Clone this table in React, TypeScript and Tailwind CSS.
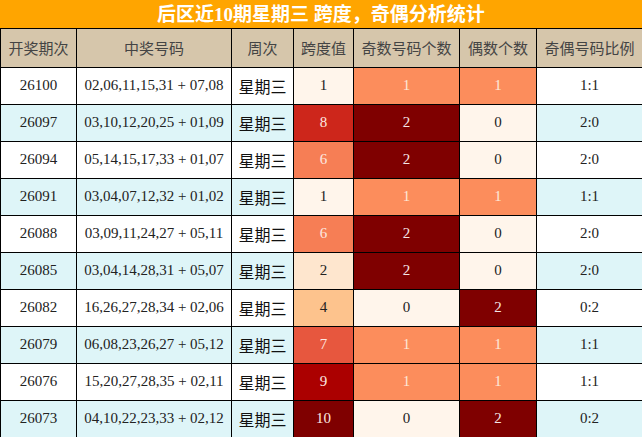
import React from "react";

const spanColor: Record<number, string> = {
  0: "bg-[#fff5eb]",
  1: "bg-[#fff5eb]",
  2: "bg-[#fee6ce]",
  3: "bg-[#fdd4ab]",
  4: "bg-[#fdc38d]",
  5: "bg-[#fca06c]",
  6: "bg-[#f67e55]",
  7: "bg-[#e7573e]",
  8: "bg-[#cd261b]",
  9: "bg-[#ab0000]",
  10: "bg-[#7f0000]",
};

const cntColor: Record<number, string> = {
  0: "bg-[#fff5eb] text-[#222]",
  1: "bg-[#fc8d5c] text-[#fde8d8]",
  2: "bg-[#7f0000] text-[#f5e6e6]",
};

const rows: [string, string, number, number, number, string][] = [
  ["26100", "02,06,11,15,31 + 07,08", 1, 1, 1, "1:1"],
  ["26097", "03,10,12,20,25 + 01,09", 8, 2, 0, "2:0"],
  ["26094", "05,14,15,17,33 + 01,07", 6, 2, 0, "2:0"],
  ["26091", "03,04,07,12,32 + 01,02", 1, 1, 1, "1:1"],
  ["26088", "03,09,11,24,27 + 05,11", 6, 2, 0, "2:0"],
  ["26085", "03,04,14,28,31 + 05,07", 2, 2, 0, "2:0"],
  ["26082", "16,26,27,28,34 + 02,06", 4, 0, 2, "0:2"],
  ["26079", "06,08,23,26,27 + 05,12", 7, 1, 1, "1:1"],
  ["26076", "15,20,27,28,35 + 02,11", 9, 1, 1, "1:1"],
  ["26073", "04,10,22,23,33 + 02,12", 10, 0, 2, "0:2"],
];

const headers = ["开奖期次", "中奖号码", "周次", "跨度值", "奇数号码个数", "偶数个数", "奇偶号码比例"];
const widths = ["w-[76px]", "w-[155px]", "w-[62px]", "w-[60px]", "w-[106px]", "w-[77px]", "w-[106px]"];

export default function App() {
  return (
    <div
      className="w-[642px] h-[437px] overflow-hidden bg-white"
      style={{ fontFamily: '"Liberation Serif", "Noto Sans CJK SC", serif' }}
    >
      <div className="h-[29px] bg-[#ffa500] border-b border-black flex items-center justify-center text-white font-bold text-[19px] leading-none">
        后区近10期星期三 跨度，奇偶分析统计
      </div>
      <table className="w-[642px] table-fixed border-collapse">
        <colgroup>
          {widths.map((w, i) => (
            <col key={i} className={w} />
          ))}
        </colgroup>
        <thead>
          <tr className="h-[38px] bg-[#d6c6ab]">
            {headers.map((h) => (
              <th
                key={h}
                className="border border-black border-t-0 font-normal text-[15px] text-[#444] p-0"
                style={{ fontFamily: '"Noto Sans CJK SC", sans-serif' }}
              >
                {h}
              </th>
            ))}
          </tr>
        </thead>
        <tbody>
          {rows.map((r, i) => {
            const rowBg = i % 2 === 0 ? "bg-white" : "bg-[#def5f8]";
            const spanText = r[2] >= 6 ? "text-[#fde8e0]" : "text-[#222]";
            return (
              <tr key={r[0]} className={`h-[37px] text-[15px] ${rowBg}`}>
                <td className="border border-black text-center text-[#222] p-0">{r[0]}</td>
                <td className="border border-black text-center text-[#222] p-0">{r[1]}</td>
                <td
                  className="border border-black text-center text-[#111] p-0 text-[16px]"
                  style={{ fontFamily: '"Noto Sans CJK SC", sans-serif' }}
                >
                  星期三
                </td>
                <td className={`border border-black text-center p-0 ${spanColor[r[2]]} ${spanText}`}>{r[2]}</td>
                <td className={`border border-black text-center p-0 ${cntColor[r[3]]}`}>{r[3]}</td>
                <td className={`border border-black text-center p-0 ${cntColor[r[4]]}`}>{r[4]}</td>
                <td className="border border-black text-center text-[#222] p-0">{r[5]}</td>
              </tr>
            );
          })}
        </tbody>
      </table>
    </div>
  );
}
